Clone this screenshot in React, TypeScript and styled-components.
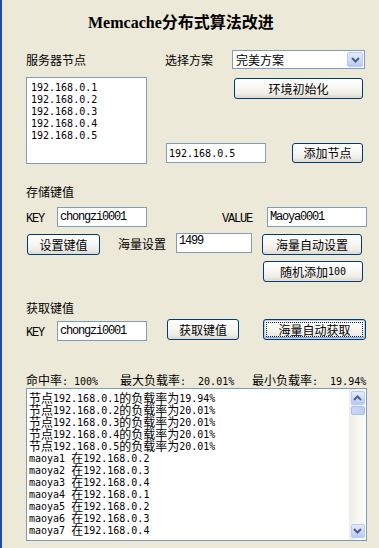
import React from 'react'
import styled, { createGlobalStyle } from 'styled-components'

const CJK = `'Noto Sans CJK SC', 'Noto Sans', sans-serif`
const MONO = `'DejaVu Sans Mono', 'Liberation Mono', monospace`
const SERIF_MONO = `'Liberation Mono', 'DejaVu Sans Mono', monospace`

const GlobalStyle = createGlobalStyle`
  html, body {
    margin: 0;
    padding: 0;
    background: #ece9d8;
  }
  body {
    font-family: ${CJK};
    font-size: 12px;
    color: #000;
  }
`

const Window = styled.div`
  width: 379px;
  height: 548px;
  box-sizing: border-box;
  border-left: 2px solid #1d4f9f;
  padding-left: 24px;
  background: #ece9d8;
  overflow: hidden;
`

const Title = styled.h1`
  margin: 0;
  height: 50px;
  box-sizing: border-box;
  padding: 11px 0 0 62px;
  font-family: ${CJK};
  font-size: 16px;
  line-height: 20px;
  font-weight: 700;
  white-space: nowrap;
`

const TitleLatin = styled.span`
  font-family: 'Liberation Serif', serif;
  font-weight: 700;
`

const Han = styled.span<{ $tight?: boolean }>`
  font-family: ${CJK};
  font-size: 12px;
  ${(p) =>
    p.$tight &&
    `
    display: inline-block;
    height: 12px;
    line-height: 12px;
    vertical-align: top;
  `}
`

const Latin = styled.span<{ $serif?: boolean; $tight?: boolean }>`
  font-family: ${(p) => (p.$serif ? SERIF_MONO : MONO)};
  font-size: ${(p) => (p.$serif ? '12px' : '10px')};
  letter-spacing: ${(p) => (p.$serif ? '-1.2px' : '0')};
  white-space: pre;
  ${(p) =>
    p.$tight &&
    `
    display: inline-block;
    height: 12px;
    line-height: 13px;
    vertical-align: top;
  `}
`

const HAN_RE = /[\u3000-\u9fff\uff00-\uffef]/
const splitRuns = (text: string) =>
  text.match(/[\u3000-\u9fff\uff00-\uffef]+|[^\u3000-\u9fff\uff00-\uffef]+/g) ?? []

const Mixed = ({ text, tight }: { text: string; tight?: boolean }) => (
  <>
    {splitRuns(text).map((run, i) =>
      HAN_RE.test(run) ? (
        <Han key={i} $tight={tight}>
          {run}
        </Han>
      ) : (
        <Latin key={i} $tight={tight}>
          {run}
        </Latin>
      )
    )}
  </>
)

const Label = styled.div<{ $w?: number; $h?: number }>`
  width: ${(p) => (p.$w ? `${p.$w}px` : 'auto')};
  height: ${(p) => p.$h ?? 19}px;
  line-height: ${(p) => p.$h ?? 19}px;
  flex-shrink: 0;
  white-space: nowrap;
`

const SectionHead = styled.div<{ $mt: number }>`
  margin-top: ${(p) => p.$mt}px;
  height: 15px;
  line-height: 15px;
`

const Row = styled.div<{ $mt?: number; $align?: string }>`
  display: flex;
  align-items: ${(p) => p.$align ?? 'center'};
  margin-top: ${(p) => p.$mt ?? 0}px;
`

const Field = styled.div<{ $w: number; $ml?: number; $mt?: number; $top?: boolean }>`
  width: ${(p) => p.$w}px;
  height: 20px;
  margin-left: ${(p) => p.$ml ?? 0}px;
  margin-top: ${(p) => p.$mt ?? 0}px;
  box-sizing: border-box;
  flex-shrink: 0;
  border: 1px solid #7f9db9;
  background: #fff;
  display: flex;
  align-items: ${(p) => (p.$top ? 'flex-start' : 'center')};
  padding: ${(p) => (p.$top ? '1px 2px 0' : '0 2px')};
  line-height: 13px;
`

const Button = styled.div<{ $w: number; $h?: number; $ml?: number; $mt?: number; $focused?: boolean }>`
  position: relative;
  width: ${(p) => p.$w}px;
  height: ${(p) => p.$h ?? 21}px;
  margin-left: ${(p) => p.$ml ?? 0}px;
  margin-top: ${(p) => p.$mt ?? 0}px;
  box-sizing: border-box;
  flex-shrink: 0;
  border: 1px solid #003c74;
  border-radius: 3px;
  background: linear-gradient(180deg, #ffffff 0%, #f8f7f3 45%, #ecebe5 80%, #d8d4c9 100%);
  box-shadow: ${(p) =>
    p.$focused
      ? 'inset 0 0 0 1px #b4cdf4, inset 0 -1px 0 1px #8aa9e8'
      : 'inset 0 -1px 0 #e2ded3'};
  display: flex;
  align-items: center;
  justify-content: center;
  line-height: 14px;
  white-space: nowrap;

  &::after {
    content: '';
    display: ${(p) => (p.$focused ? 'block' : 'none')};
    position: absolute;
    inset: 2px;
    border: 1px dotted #222;
  }
`

/* server nodes block */
const NodeGrid = styled.div`
  display: grid;
  grid-template-columns: 121px 1fr;
  column-gap: 18px;
`

const LeftCol = styled.div`
  display: flex;
  flex-direction: column;
  gap: 8px;
`

const ListBox = styled.div`
  width: 121px;
  height: 87px;
  box-sizing: border-box;
  border: 1px solid #7f9db9;
  background: #fff;
  padding: 2px 4px;
`

const ListItem = styled.div`
  height: 12px;
  line-height: 12px;
`

const RightCol = styled.div`
  display: flex;
  flex-direction: column;
`

const Select = styled.div`
  width: 133px;
  height: 19px;
  box-sizing: border-box;
  border: 1px solid #7f9db9;
  background: #fff;
  display: flex;
  align-items: center;
  padding: 1px 1px 1px 3px;
`

const SelectValue = styled.div`
  flex: 1;
`

const ArrowBox = styled.div<{ $w?: number; $h?: number }>`
  width: ${(p) => p.$w ?? 15}px;
  height: ${(p) => p.$h ?? 15}px;
  box-sizing: border-box;
  border: 1px solid #b8cbf2;
  border-radius: 2px;
  background: linear-gradient(180deg, #e3ebfd 0%, #cddafa 55%, #b7c9f3 100%);
  display: flex;
  align-items: center;
  justify-content: center;
  flex-shrink: 0;
`

const Chevron = ({ up }: { up?: boolean }) => (
  <svg width="9" height="6" viewBox="0 0 9 6">
    <path
      d={up ? 'M1 5 L4.5 1.5 L8 5' : 'M1 1 L4.5 4.5 L8 1'}
      fill="none"
      stroke="#4d6185"
      strokeWidth="2"
    />
  </svg>
)

/* stats + log */
const Stats = styled.div`
  display: grid;
  grid-template-columns: 94px 132px auto;
  margin-top: 32px;
  height: 14px;
  line-height: 14px;
  white-space: nowrap;
`

const LogBox = styled.div`
  margin-top: 1px;
  width: 341px;
  height: 153px;
  box-sizing: border-box;
  border: 1px solid #7f9db9;
  background: #fff;
  display: flex;
`

const LogText = styled.div`
  flex: 1;
  padding: 3px 2px 0;
  overflow: hidden;
`

const LogLine = styled.div`
  height: 12px;
  line-height: 12px;
  white-space: nowrap;
`

const ScrollTrack = styled.div`
  width: 17px;
  box-sizing: border-box;
  padding: 2px 1px;
  display: flex;
  flex-direction: column;
  align-items: center;
  gap: 1px;
  background: linear-gradient(90deg, #eeede5 0%, #f7f6f1 50%, #fdfdfb 100%);
`

const Thumb = styled.div`
  width: 14px;
  height: 9px;
  box-sizing: border-box;
  border: 1px solid #a8bde9;
  border-radius: 2px;
  background: linear-gradient(90deg, #c9d8fb, #bccef6);
`

const Fill = styled.div`
  flex: 1;
`

const NODES = ['192.168.0.1', '192.168.0.2', '192.168.0.3', '192.168.0.4', '192.168.0.5']

const LOG = [
  '节点192.168.0.1的负载率为19.94%',
  '节点192.168.0.2的负载率为20.01%',
  '节点192.168.0.3的负载率为20.01%',
  '节点192.168.0.4的负载率为20.01%',
  '节点192.168.0.5的负载率为20.01%',
  'maoya1 在192.168.0.2',
  'maoya2 在192.168.0.3',
  'maoya3 在192.168.0.4',
  'maoya4 在192.168.0.1',
  'maoya5 在192.168.0.2',
  'maoya6 在192.168.0.3',
  'maoya7 在192.168.0.4',
]

const App = () => (
  <>
    <GlobalStyle />
    <Window>
      <Title>
        <TitleLatin>Memcache</TitleLatin>分布式算法改进
      </Title>

      <NodeGrid>
        <LeftCol>
          <Label>服务器节点</Label>
          <ListBox>
            {NODES.map((n) => (
              <ListItem key={n}>
                <Latin>{n}</Latin>
              </ListItem>
            ))}
          </ListBox>
        </LeftCol>
        <RightCol>
          <Row>
            <Label $w={67}>选择方案</Label>
            <Select>
              <SelectValue>完美方案</SelectValue>
              <ArrowBox $w={16} $h={15}>
                <Chevron />
              </ArrowBox>
            </Select>
          </Row>
          <Button $w={129} $ml={69} $mt={9}>
            环境初始化
          </Button>
          <Row $mt={44}>
            <Field $w={100} $ml={1}>
              <Latin>192.168.0.5</Latin>
            </Field>
            <Button $w={71} $h={20} $ml={26}>
              添加节点
            </Button>
          </Row>
        </RightCol>
      </NodeGrid>

      <SectionHead $mt={20}>存储键值</SectionHead>
      <Row $mt={8}>
        <Label $w={31} $h={20}>
          <Latin $serif>KEY</Latin>
        </Label>
        <Field $w={90}>
          <Latin $serif>chongzi0001</Latin>
        </Field>
        <Label $w={45} $h={20} style={{ marginLeft: 75 }}>
          <Latin $serif>VALUE</Latin>
        </Label>
        <Field $w={100}>
          <Latin $serif>Maoya0001</Latin>
        </Field>
      </Row>
      <Row $mt={6} $align="flex-start">
        <Button $w={73} $ml={1} $mt={1}>
          设置键值
        </Button>
        <Label $w={58} $h={21} style={{ marginLeft: 18 }}>
          海量设置
        </Label>
        <Field $w={76} $top>
          <Latin $serif>1499</Latin>
        </Field>
        <Button $w={100} $ml={10} $mt={1}>
          海量自动设置
        </Button>
      </Row>
      <Row $mt={6}>
        <Button $w={100} $ml={237}>
          <Mixed text="随机添加100" />
        </Button>
      </Row>

      <SectionHead $mt={18}>获取键值</SectionHead>
      <Row $mt={4} $align="flex-start">
        <Label $w={31} $h={20} style={{ marginTop: 2 }}>
          <Latin $serif>KEY</Latin>
        </Label>
        <Field $w={90} $mt={2}>
          <Latin $serif>chongzi0001</Latin>
        </Field>
        <Button $w={72} $ml={20}>
          获取键值
        </Button>
        <Button $w={103} $ml={24} $focused>
          海量自动获取
        </Button>
      </Row>

      <Stats>
        <span>
          <Mixed text="命中率: 100%" />
        </span>
        <span>
          <Mixed text="最大负载率:  20.01%" />
        </span>
        <span>
          <Mixed text="最小负载率:  19.94%" />
        </span>
      </Stats>

      <LogBox>
        <LogText>
          {LOG.map((line) => (
            <LogLine key={line}>
              <Mixed text={line} tight />
            </LogLine>
          ))}
        </LogText>
        <ScrollTrack>
          <ArrowBox $w={14} $h={14}>
            <Chevron up />
          </ArrowBox>
          <Thumb />
          <Fill />
          <ArrowBox $w={14} $h={14}>
            <Chevron />
          </ArrowBox>
        </ScrollTrack>
      </LogBox>
    </Window>
  </>
)

export default App
